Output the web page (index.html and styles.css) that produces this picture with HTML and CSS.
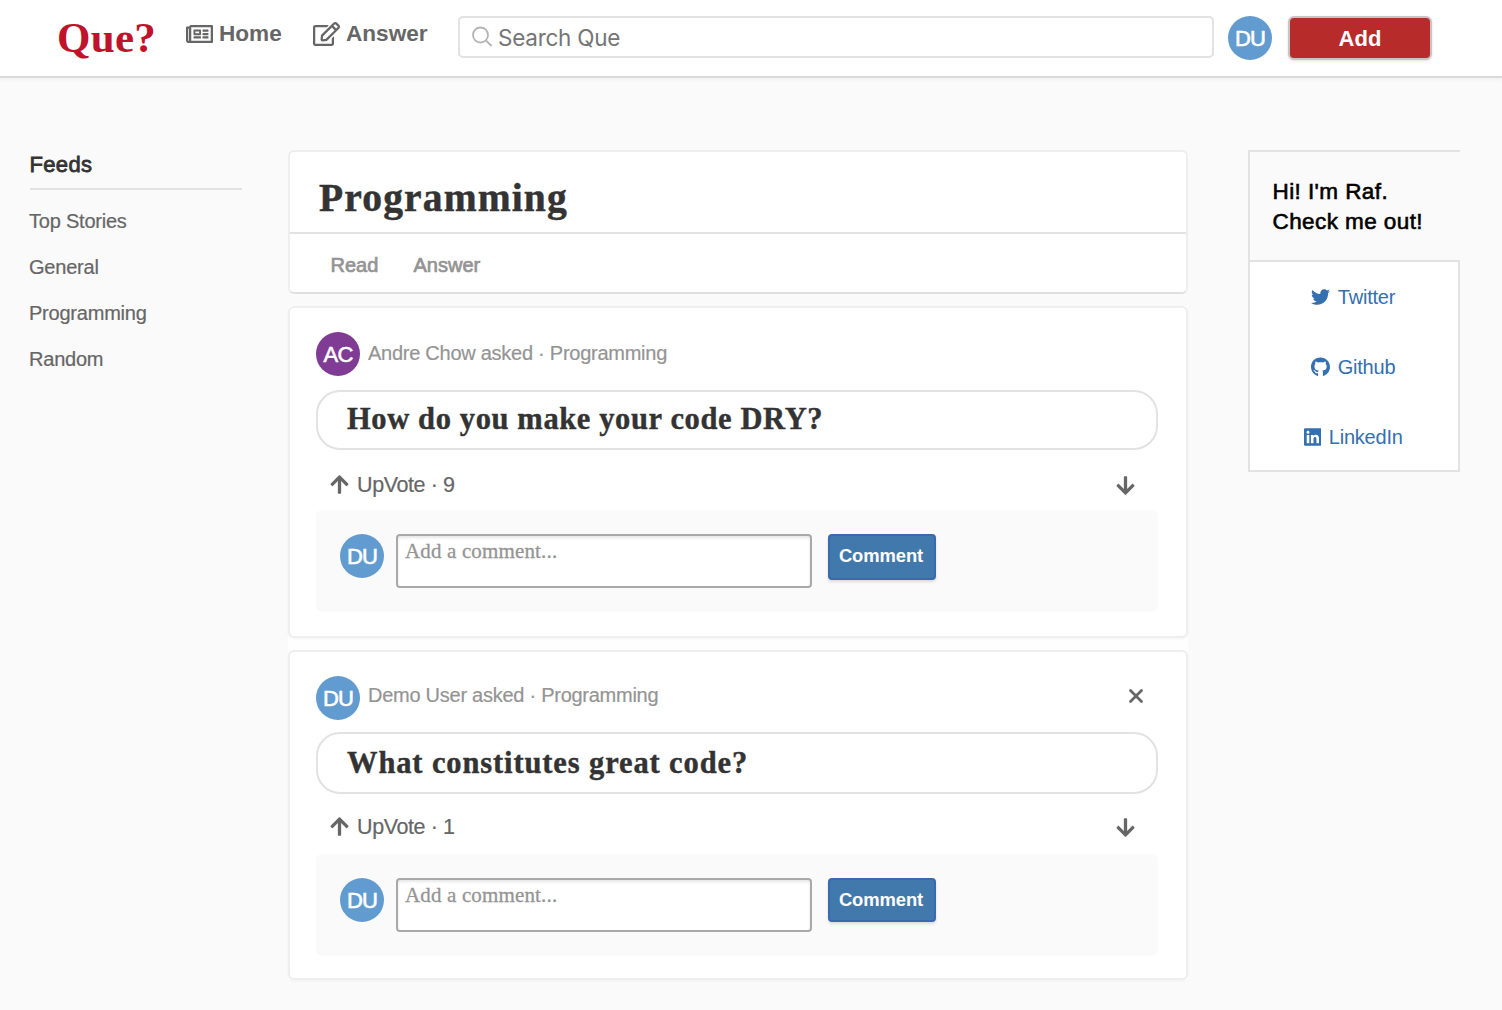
FILE: index.html
```html
<!DOCTYPE html>
<html lang="en">
<head>
<meta charset="utf-8">
<title>Que?</title>
<link rel="stylesheet" href="styles.css">
</head>
<body>
<svg class="sprite" aria-hidden="true">
  <symbol id="newspaper" viewBox="0 0 576 512"><path d="M552 64H112c-20.858 0-38.643 13.377-45.248 32H24c-13.255 0-24 10.745-24 24v272c0 30.928 25.072 56 56 56h496c13.255 0 24-10.745 24-24V88c0-13.255-10.745-24-24-24zM48 392V144h16v248c0 4.411-3.589 8-8 8s-8-3.589-8-8zm480 8H111.422c.374-2.614.578-5.283.578-8V112h416v288zM172 280h136c6.627 0 12-5.373 12-12v-96c0-6.627-5.373-12-12-12H172c-6.627 0-12 5.373-12 12v96c0 6.627 5.373 12 12 12zm28-80h80v40h-80v-40zm-40 140v-24c0-6.627 5.373-12 12-12h136c6.627 0 12 5.373 12 12v24c0 6.627-5.373 12-12 12H172c-6.627 0-12-5.373-12-12zm192 0v-24c0-6.627 5.373-12 12-12h104c6.627 0 12 5.373 12 12v24c0 6.627-5.373 12-12 12H364c-6.627 0-12-5.373-12-12zm0-144v-24c0-6.627 5.373-12 12-12h104c6.627 0 12 5.373 12 12v24c0 6.627-5.373 12-12 12H364c-6.627 0-12-5.373-12-12zm0 72v-24c0-6.627 5.373-12 12-12h104c6.627 0 12 5.373 12 12v24c0 6.627-5.373 12-12 12H364c-6.627 0-12-5.373-12-12z"/></symbol>
  <symbol id="edit" viewBox="0 0 576 512"><path d="M402.3 344.9l32-32c5-5 13.7-1.5 13.7 5.7V464c0 26.5-21.5 48-48 48H48c-26.5 0-48-21.5-48-48V112c0-26.5 21.5-48 48-48h273.5c7.1 0 10.7 8.6 5.7 13.7l-32 32c-1.5 1.5-3.5 2.3-5.7 2.3H48v352h352V350.5c0-2.1.8-4.1 2.3-5.6zm156.6-201.8L296.3 405.7l-90.4 10c-26.2 2.9-48.5-19.2-45.6-45.6l10-90.4L432.9 17.1c22.9-22.9 59.9-22.9 82.7 0l43.2 43.2c22.9 22.9 22.9 60 .1 82.8zM460.1 174L402 115.9 216.2 301.8l-7.3 65.3 65.3-7.3L460.1 174zm64.8-79.7l-43.2-43.2c-4.1-4.1-10.8-4.1-14.8 0L436 82l58.1 58.1 30.9-30.9c4-4.2 4-10.8-.1-14.9z"/></symbol>
  <symbol id="arrow" viewBox="0 0 448 512"><path d="M34.9 289.5l-22.2-22.2c-9.4-9.4-9.4-24.6 0-33.9L207 39c9.4-9.4 24.6-9.4 33.9 0l194.3 194.3c9.4 9.4 9.4 24.6 0 33.9L413 289.4c-9.5 9.5-25 9.3-34.3-.4L264 168.6V456c0 13.3-10.7 24-24 24h-32c-13.3 0-24-10.7-24-24V168.6L69.2 289.1c-9.3 9.8-24.8 10-34.3.4z"/></symbol>
  <symbol id="twitter" viewBox="0 0 512 512"><path d="M459.37 151.716c.325 4.548.325 9.097.325 13.645 0 138.72-105.583 298.558-298.558 298.558-59.452 0-114.68-17.219-161.137-47.106 8.447.974 16.568 1.299 25.34 1.299 49.055 0 94.213-16.568 130.274-44.832-46.132-.975-84.792-31.188-98.112-72.772 6.498.974 12.995 1.624 19.818 1.624 9.421 0 18.843-1.3 27.614-3.573-48.081-9.747-84.143-51.98-84.143-102.985v-1.299c13.969 7.797 30.214 12.67 47.431 13.319-28.264-18.843-46.781-51.005-46.781-87.391 0-19.492 5.197-37.36 14.294-52.954 51.655 63.675 129.3 105.258 216.365 109.807-1.624-7.797-2.599-15.918-2.599-24.04 0-57.828 46.782-104.934 104.934-104.934 30.213 0 57.502 12.67 76.67 33.137 23.715-4.548 46.456-13.32 66.599-25.34-7.798 24.366-24.366 44.833-46.132 57.827 21.117-2.273 41.584-8.122 60.426-16.243-14.292 20.791-32.161 39.308-52.628 54.253z"/></symbol>
  <symbol id="github" viewBox="0 0 496 512"><path d="M165.900 397.400c0 2-2.300 3.600-5.200 3.600-3.300.3-5.600-1.300-5.600-3.600 0-2 2.300-3.600 5.200-3.600 3-.3 5.600 1.300 5.600 3.600zM244.800 8C106.100 8 0 113.300 0 252c0 110.900 69.800 205.800 169.500 239.200 12.800 2.300 17.300-5.600 17.300-12.100 0-6.200-.3-40.400-.3-61.400 0 0-70 15-84.700-29.800 0 0-11.400-29.100-27.800-36.600 0 0-22.900-15.700 1.600-15.400 0 0 24.900 2 38.600 25.800 21.900 38.600 58.600 27.500 72.900 20.900 2.300-16 8.800-27.100 16-33.700-55.900-6.200-112.300-14.300-112.300-110.500 0-27.500 7.600-41.300 23.600-58.900-2.600-6.500-11.100-33.300 2.600-67.900 20.900-6.500 69 27 69 27 20-5.600 41.500-8.500 62.800-8.500s42.800 2.900 62.800 8.500c0 0 48.100-33.600 69-27 13.700 34.700 5.200 61.400 2.600 67.900 16 17.700 25.800 31.500 25.800 58.900 0 96.500-58.900 104.200-114.800 110.500 9.200 7.900 17 22.900 17 46.400 0 33.700-.3 75.400-.3 83.600 0 6.500 4.600 14.400 17.300 12.100C428.200 457.800 496 362.900 496 252 496 113.300 383.500 8 244.800 8z"/></symbol>
  <symbol id="linkedin" viewBox="0 0 448 512"><path d="M416 32H31.900C14.300 32 0 46.500 0 64.300v383.400C0 465.500 14.300 480 31.900 480H416c17.600 0 32-14.500 32-32.300V64.300c0-17.800-14.400-32.300-32-32.300zM135.400 416H69V202.200h66.500V416zm-33.200-243c-21.300 0-38.500-17.300-38.500-38.500S80.900 96 102.200 96c21.200 0 38.500 17.300 38.500 38.500 0 21.300-17.200 38.500-38.500 38.500zm282.100 243h-66.400V312c0-24.800-.5-56.700-34.500-56.700-34.600 0-39.900 27-39.900 54.900V416h-66.400V202.200h63.700v29.200h.9c8.900-16.800 30.600-34.500 62.900-34.500 67.200 0 79.700 44.300 79.700 101.900V416z"/></symbol>
</svg>

<header class="topbar">
  <a class="logo">Que?</a>
  <nav class="nav">
    <a class="nav-link nav-home"><svg class="nav-icon"><use href="#newspaper"/></svg><span>Home</span></a>
    <a class="nav-link"><svg class="nav-icon"><use href="#edit"/></svg><span>Answer</span></a>
  </nav>
  <div class="search">
    <svg class="search-icon" viewBox="0 0 22 22"><circle cx="8.500" cy="9" r="7.500"/><path d="M14 14.500L19.500 20"/></svg>
    <span>Search Que</span>
  </div>
  <div class="avatar"><span>DU</span></div>
  <button class="add-button">Add</button>
</header>

<div class="page">
  <aside class="feeds">
    <h2 class="feeds-title">Feeds</h2>
    <a class="feed-link">Top Stories</a>
    <a class="feed-link">General</a>
    <a class="feed-link">Programming</a>
    <a class="feed-link">Random</a>
  </aside>

  <main class="content">
    <section class="topic">
      <h1 class="topic-title">Programming</h1>
      <div class="tabs"><a class="tab tab-read">Read</a><a class="tab tab-answer">Answer</a></div>
    </section>

    <div class="questions">
      <article class="question question-first">
        <div class="asker">
          <div class="avatar avatar-purple"><span>AC</span></div>
          <p class="byline">Andre Chow asked · Programming</p>
        </div>
        <h2 class="question-title">How do you make your code DRY?</h2>
        <div class="votes">
          <a class="upvote"><svg class="arrow"><use href="#arrow"/></svg><span>UpVote · 9</span></a>
          <svg class="arrow arrow-down"><use href="#arrow"/></svg>
        </div>
        <div class="comment">
          <div class="avatar"><span>DU</span></div>
          <div class="comment-input">Add a comment...</div>
          <button class="comment-button">Comment</button>
        </div>
      </article>

      <article class="question question-own">
        <div class="asker">
          <div class="avatar"><span>DU</span></div>
          <p class="byline">Demo User asked · Programming</p>
          <svg class="close" viewBox="0 0 16 16"><path d="M2.500 2.500L13.500 13.500M13.500 2.500L2.500 13.500"/></svg>
        </div>
        <h2 class="question-title">What constitutes great code?</h2>
        <div class="votes">
          <a class="upvote"><svg class="arrow"><use href="#arrow"/></svg><span>UpVote · 1</span></a>
          <svg class="arrow arrow-down"><use href="#arrow"/></svg>
        </div>
        <div class="comment">
          <div class="avatar"><span>DU</span></div>
          <div class="comment-input">Add a comment...</div>
          <button class="comment-button">Comment</button>
        </div>
      </article>
    </div>
  </main>

  <aside class="about">
    <div class="about-title"><p>Hi! I'm Raf.</p><p>Check me out!</p></div>
    <div class="about-links">
      <a class="about-link"><svg class="brand"><use href="#twitter"/></svg>Twitter</a>
      <a class="about-link"><svg class="brand"><use href="#github"/></svg>Github</a>
      <a class="about-link"><svg class="brand brand-narrow"><use href="#linkedin"/></svg>LinkedIn</a>
    </div>
  </aside>
</div>
</body>
</html>
```

FILE: styles.css
```css
* { box-sizing: border-box; margin: 0; padding: 0; }

body {
  min-height: 1010px;
  background: #fafafa;
  color: #333;
  font-family: "Liberation Sans", Arial, sans-serif;
  overflow: hidden;
}

svg { display: block; flex: none; fill: currentColor; }
.sprite { position: absolute; width: 0; height: 0; }

/* Top bar */
.topbar {
  display: flex;
  align-items: flex-start;
  height: 78px;
  padding-left: 57px;
  background: #fff;
  border-bottom: 2px solid #dcdcdc;
  box-shadow: 0 2px 4px rgba(0, 0, 0, .04);
}
.logo {
  width: 129px;
  padding-top: 13px;
  color: #c0132b;
  font: bold 43px/50px "Liberation Serif", serif;
  letter-spacing: .3px;
}
.nav { display: flex; width: 272px; padding-top: 20px; }
.nav-link {
  display: flex;
  align-items: center;
  gap: 6px;
  height: 27px;
  color: #666;
  font-size: 22.6px;
  font-weight: bold;
  line-height: 28px;
}
.nav-link span { padding-top: 1px; }
.nav-home { width: 127px; }
.nav-icon { width: 27px; height: 24px; }
.search {
  display: flex;
  align-items: center;
  width: 756px;
  height: 42px;
  margin-top: 16px;
  padding-left: 12px;
  border: 2px solid #e2e2e2;
  border-radius: 5px;
  color: #757575;
  font: 22.500px/38px Inter, sans-serif;
  letter-spacing: -.25px;
}
.search span { padding-top: 1px; }
.search-icon {
  width: 22px;
  height: 22px;
  margin-right: 4px;
  fill: none;
  stroke: #b4b4b4;
  stroke-width: 1.8;
}
.avatar {
  display: flex;
  align-items: center;
  justify-content: center;
  flex: none;
  width: 44px;
  height: 44px;
  padding-top: 1px;
  border-radius: 50%;
  background: #629bd0;
  color: #fff;
  font-size: 22px;
  line-height: 44px;
  letter-spacing: -.8px;
  -webkit-text-stroke: .6px #fff;
}
.avatar-purple { background: #803b94; }
.topbar .avatar { margin: 16px 16px 0 14px; }
.add-button {
  width: 144px;
  height: 44px;
  margin-top: 16px;
  padding-top: 1px;
  border: 2px solid #c5c5c5;
  border-radius: 6px;
  background: #b72c2b;
  box-shadow: 0 1px 3px rgba(0, 0, 0, .12);
  color: #fff;
  font: bold 22px/39px "Liberation Sans", sans-serif;
}

/* Columns */
.page {
  display: grid;
  grid-template-columns: 212px 900px 212px;
  column-gap: 46px;
  align-items: start;
  padding: 72px 0 0 30px;
}

.feeds-title {
  height: 40px;
  margin-bottom: 8px;
  border-bottom: 2px solid #e2e2e2;
  font-size: 22px;
  font-weight: normal;
  line-height: 29px;
  letter-spacing: .35px;
  text-indent: -.5px;
  -webkit-text-stroke: .8px #333;
}
.feed-link {
  display: block;
  height: 46px;
  margin-left: -1px;
  color: #666;
  font-size: 20px;
  line-height: 46px;
  letter-spacing: -.22px;
  -webkit-text-stroke: .2px #666;
}

/* Topic header */
.topic {
  height: 144px;
  margin-bottom: 12px;
  border: 2px solid #eee;
  border-bottom-color: #e0e0e0;
  border-radius: 6px;
  background: #fff;
}
.topic-title {
  height: 82px;
  padding-left: 29px;
  border-bottom: 2px solid #e2e2e2;
  font: bold 39.500px/92px "Liberation Serif", serif;
  letter-spacing: 1.15px;
  -webkit-text-stroke: .5px #333;
}
.tabs { display: flex; padding-left: 40.500px; }
.tab {
  color: #949494;
  font-size: 20px;
  line-height: 62px;
  -webkit-text-stroke: .7px #949494;
}
.tab-read { width: 83px; }

/* Questions */
.questions { display: flex; flex-direction: column; gap: 12px; background: #fefefe; }
.question {
  padding: 24px 28px 24px 26px;
  border: 2px solid #eee;
  border-radius: 6px;
  background: #fff;
  box-shadow: 0 1px 3px rgba(0, 0, 0, .04);
}
.question-first { height: 332px; }
.question-own { height: 330px; }
.asker { display: flex; height: 58px; }
.question-own .asker { height: 56px; }
.byline {
  margin-left: 8px;
  color: #949494;
  font-size: 20px;
  line-height: 42px;
  letter-spacing: -.26px;
  -webkit-text-stroke: .2px #949494;
}
.question-own .byline { line-height: 38px; }
.close {
  width: 16px;
  height: 16px;
  margin: 12px 14px 0 auto;
  fill: none;
  stroke: #666;
  stroke-width: 2.8;
  stroke-linecap: round;
}
.question-title {
  height: 60px;
  padding-left: 29px;
  border: 2px solid #e2e2e2;
  border-radius: 24px;
  font: bold 30.500px/55px "Liberation Serif", serif;
  letter-spacing: .62px;
  -webkit-text-stroke: .4px #333;
}
.question-own .question-title { height: 62px; line-height: 59px; letter-spacing: .88px; }
.votes {
  display: flex;
  justify-content: space-between;
  height: 60px;
  padding: 24px 23px 0 14px;
  color: #666;
}
.question-own .votes { padding-top: 22px; }
.upvote {
  display: flex;
  gap: 8px;
  font-size: 21.500px;
  line-height: 23px;
  letter-spacing: -.4px;
  -webkit-text-stroke: .2px #666;
}
.arrow { width: 19px; height: 21px; stroke: none; }
.arrow-down { margin-top: 1px; transform: rotate(180deg); }
.comment {
  display: flex;
  align-items: flex-start;
  height: 102px;
  padding: 24px;
  border-radius: 6px;
  background: #fafafa;
}
.comment-input {
  width: 416px;
  height: 54px;
  margin: 0 16px 0 12px;
  padding-left: 7px;
  border: 2px solid #a9a9a9;
  border-radius: 4px;
  background: #fff;
  box-shadow: inset 0 2px 3px rgba(0, 0, 0, .1);
  color: #949494;
  font: 21px/31px "Liberation Serif", serif;
  letter-spacing: .15px;
  -webkit-text-stroke: .3px #949494;
}
.comment-button {
  width: 108px;
  height: 46px;
  padding: 0 2px 2px 0;
  border: 2px solid #3a69ad;
  border-radius: 4px;
  background: #4279ad;
  box-shadow: 0 2px 3px rgba(0, 0, 0, .12);
  color: #fff;
  font: bold 18.4px/40px "Liberation Sans", sans-serif;
  letter-spacing: -.1px;
}
.question-own .comment-button { height: 44px; padding-bottom: 0; }

/* About box */
.about { width: 212px; margin-left: 14px; }
.about-title {
  height: 110px;
  padding: 25px 0 0 22.500px;
  border: solid #e2e2e2;
  border-width: 2px 0 0 2px;
  color: #000;
  font-size: 22.500px;
  line-height: 30px;
  letter-spacing: .42px;
  white-space: nowrap;
  -webkit-text-stroke: .6px #000;
}
.about-links {
  height: 212px;
  border: 2px solid #e2e2e2;
  background: #fff;
}
.about-link {
  display: flex;
  align-items: center;
  justify-content: center;
  gap: 7.500px;
  height: 70px;
  padding-right: 1.500px;
  color: #346fb0;
  font-size: 20px;
  line-height: 70px;
  letter-spacing: -.2px;
}
.brand { width: 19px; height: 20px; }
.brand-narrow { width: 17.5px; }
```
